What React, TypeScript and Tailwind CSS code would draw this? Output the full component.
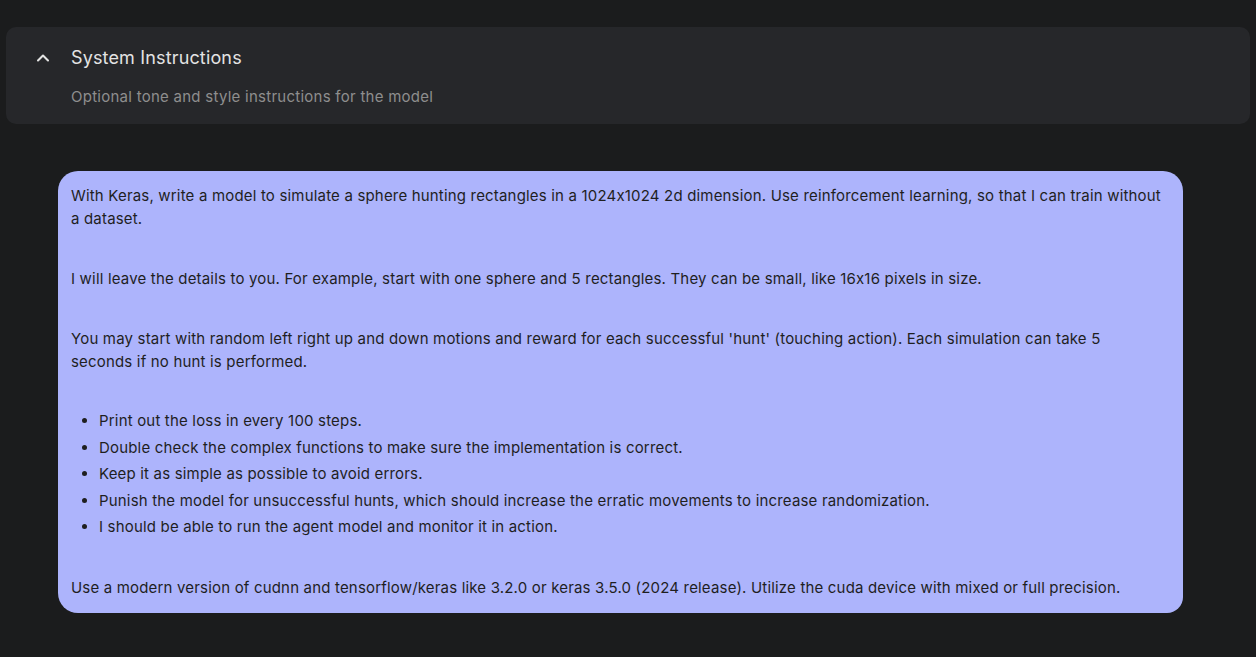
import { ChevronUp } from "lucide-react";

const listItems = [
  "Print out the loss in every 100 steps.",
  "Double check the complex functions to make sure the implementation is correct.",
  "Keep it as simple as possible to avoid errors.",
  "Punish the model for unsuccessful hunts, which should increase the erratic movements to increase randomization.",
  "I should be able to run the agent model and monitor it in action.",
];

export default function App() {
  return (
    <div className="w-[1256px] h-[657px] overflow-hidden bg-[#1b1c1d] pt-[27px] font-['Inter',sans-serif] [font-feature-settings:'calt'_0]">
      <div className="mx-[6px] h-[97px] rounded-[10px] bg-[#26272a] pl-[27px] pt-[17px]">
        <div className="flex items-center gap-[18px]">
          <ChevronUp size={20} strokeWidth={2.5} className="text-[#e3e3e3]" />
          <span className="text-[18px] tracking-[0.15px] text-[#e3e3e3]">System Instructions</span>
        </div>
        <div className="pl-[38px] pt-[15px] text-[15px] tracking-[0.26px] text-[#8e8e8e]">
          Optional tone and style instructions for the model
        </div>
      </div>
      <div className="mt-[47px] ml-[58px] w-[1125px] rounded-[20px] rounded-br-[16px] bg-[#adb4fc] px-[13px] pt-[13px] pb-[14px] text-[15px] leading-[23px] tracking-[0.18px] text-[#1f1f1f]">
        <p>
          With Keras, write a model to simulate a sphere hunting rectangles in a 1024x1024 2d dimension. Use reinforcement learning, so that I can train without a dataset.
        </p>
        <p className="mt-[37px]">
          I will leave the details to you. For example, start with one sphere and 5 rectangles. They can be small, like 16x16 pixels in size.
        </p>
        <p className="mt-[37px] pr-[8px]">
          You may start with random left right up and down motions and reward for each successful 'hunt' (touching action). Each simulation can take 5 seconds if no hunt is performed.
        </p>
        <ul className="mt-[35px] list-disc pl-[28px]">
          {listItems.map((item) => (
            <li key={item} className="leading-[26.5px]">
              {item}
            </li>
          ))}
        </ul>
        <p className="mt-[35px]">
          Use a modern version of cudnn and tensorflow/keras like 3.2.0 or keras 3.5.0 (2024 release). Utilize the cuda device with mixed or full precision.
        </p>
      </div>
    </div>
  );
}
